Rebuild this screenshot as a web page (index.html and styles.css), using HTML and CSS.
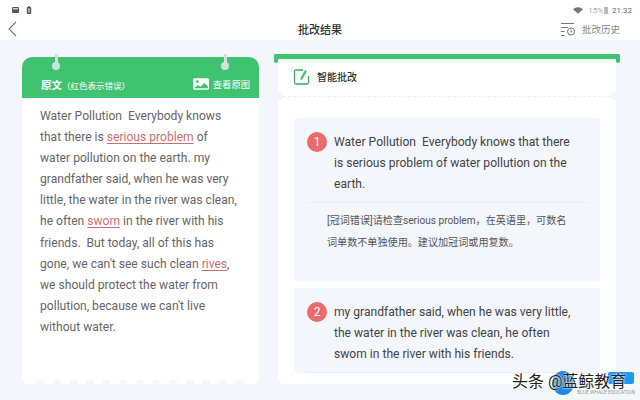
FILE: index.html
```html
<!DOCTYPE html>
<html lang="zh-CN">
<head>
    <meta charset="UTF-8">
    <meta name="viewport" content="width=device-width, initial-scale=1.0">
    <title>批改结果</title>
    <link rel="stylesheet" href="styles.css">
</head>
<body>
    <div class="status-bar">
        <div class="status-left">
            <svg width="7" height="6" viewBox="0 0 7 6"><rect width="7" height="6" rx="1" fill="#555"/><rect x="1" y="1" width="5" height="1.500" fill="#ccc"/></svg>
            <svg width="6" height="8" viewBox="0 0 6 9"><rect x="0.500" y="1" width="5" height="8" rx="1" fill="#555"/><rect x="2" y="0" width="2" height="1" fill="#555"/><rect x="2" y="2.500" width="2" height="5" fill="#bbb"/></svg>
        </div>
        <div class="status-right">
            <svg width="10" height="7" viewBox="0 0 12 8"><path d="M0 2.500C3.500-.8 8.500-.8 12 2.500L6 8Z" fill="#777"/></svg>
            <span class="battery-pct">15%</span>
            <span class="battery"></span>
            <span class="clock">21:32</span>
        </div>
    </div>
    <header class="top-bar">
        <svg class="back" width="9" height="16" viewBox="0 0 9 16"><path d="M8 1L1 8l7 7" fill="none" stroke="#777" stroke-width="1.100"/></svg>
        <h1>批改结果</h1>
        <div class="history">
            <svg width="15" height="13" viewBox="0 0 15 13" fill="none" stroke="#777" stroke-width="1"><path d="M1 .5h13M1 4.500h7M1 8.500h3.500M1 12.500h3.500"/><circle cx="11" cy="8.500" r="3.500"/><path d="M11 6.800v1.900h1.500"/></svg>
            <span>批改历史</span>
        </div>
    </header>
    <main class="content">
        <section class="origin">
            <div class="origin-head">
                <span class="hole hole-left"></span>
                <span class="hole hole-right"></span>
                <div class="origin-title"><b>原文</b><small>（红色表示错误）</small></div>
                <div class="origin-link">
                    <svg width="16" height="12" viewBox="0 0 15 11"><rect width="15" height="11" rx="1.500" fill="#fff"/><circle cx="4" cy="3.200" r="1.300" fill="#3fc371"/><path d="M1 9.500l3.500-3 2.500 1.500 3.500-3.500 3.500 3v2z" fill="#3fc371"/></svg>
                    <span>查看原图</span>
                </div>
            </div>
            <p class="origin-text">Water Pollution&nbsp; Everybody knows that there is <u>serious problem</u> of water pollution on the earth. my grandfather said, when he was very little, the water in the river was clean, he often <u>swom</u> in the river with his friends.&nbsp; But today, all of this has gone, we can't see such clean <u>rives</u>, we should protect the water from pollution, because we can't live without water.</p>
            <div class="scallops"></div>
        </section>
        <section class="review">
            <div class="review-bar"></div>
            <div class="review-card">
                <div class="review-head">
                    <svg width="19" height="18" viewBox="0 0 19 18" fill="none"><path d="M10 2H3a1.500 1.500 0 0 0-1.500 1.500v11A1.500 1.500 0 0 0 3 16h11a1.500 1.500 0 0 0 1.500-1.500V8" stroke="#3fa868" stroke-width="1.300"/><path d="M8 11.500L13 2.500" stroke="#3fc371" stroke-width="2.200"/></svg>
                    <span>智能批改</span>
                </div>
                <div class="review-list">
                    <article class="item">
                        <div class="sentence">
                            <span class="num">1</span>
                            <p>Water Pollution&nbsp; Everybody knows that there is serious problem of water pollution on the earth.</p>
                        </div>
                        <div class="note">[冠词错误]请检查serious problem，在英语里，可数名词单数不单独使用。建议加冠词或用复数。</div>
                    </article>
                    <article class="item item-cut">
                        <div class="sentence">
                            <span class="num">2</span>
                            <p>my grandfather said, when he was very little, the water in the river was clean, he often swom in the river with his friends.</p>
                        </div>
                    </article>
                </div>
            </div>
        </section>
    </main>
    <div class="watermark">
        <span class="wm-blob"></span>
        <span class="wm-tag"></span>
        <span class="wm-sub">BLUE WHALE EDUCATION</span>
        <span class="wm-text">头条 @蓝鲸教育</span>
    </div>
</body>
</html>
```

FILE: styles.css
```css
* {
    margin: 0;
    padding: 0;
    box-sizing: border-box;
}
html, body {
    height: 400px;
    overflow: hidden;
}
body {
    font-family: Roboto, "Noto Sans CJK SC", sans-serif;
    background-color: #f3f6fa;
    color: #555;
}

.status-bar {
    height: 18px;
    padding: 2px 8px 0 12px;
    display: flex;
    justify-content: space-between;
    align-items: center;
    background-color: #fff;
}
.status-left {
    display: flex;
    align-items: center;
    gap: 7px;
}
.status-right {
    display: flex;
    align-items: center;
    font-size: 8px;
    color: #aaa;
}
.battery-pct {
    margin-left: 5px;
}
.battery {
    width: 4px;
    height: 7px;
    margin-left: 1px;
    background-color: #c9b5a8;
}
.clock {
    margin-left: 4px;
    color: #666;
}

.top-bar {
    height: 22px;
    padding: 0 20px 0 8px;
    display: flex;
    align-items: center;
    justify-content: space-between;
    background-color: #fff;
    position: relative;
}
.top-bar h1 {
    font-size: 11px;
    font-weight: 500;
    color: #333;
    position: absolute;
    left: 0;
    right: 0;
    text-align: center;
}
.history {
    display: flex;
    align-items: center;
    gap: 7px;
    font-size: 9.500px;
    color: #888;
}

.content {
    padding: 14px 20px 0 22px;
    display: flex;
    gap: 19px;
}

.origin {
    width: 237px;
    height: 327px;
    margin-top: 3px;
    display: flex;
    flex-direction: column;
    border-radius: 10px 10px 6px 6px;
    background-color: #fff;
}
.origin-head {
    height: 41px;
    padding: 12px 9px 0 19px;
    display: flex;
    justify-content: space-between;
    align-items: center;
    background-color: #3fc371;
    border-radius: 10px 10px 0 0;
    position: relative;
    color: #fff;
}
.hole {
    position: absolute;
    top: 5px;
    width: 8px;
    height: 8px;
    border-radius: 50%;
    background-color: #cfe3d8;
}
.hole::before {
    content: "";
    position: absolute;
    left: 2.500px;
    top: -8px;
    width: 3px;
    height: 10px;
    background-color: #e3d8dc;
}
.hole-left {
    left: 30px;
}
.hole-right {
    left: 199px;
}
.origin-title b {
    font-size: 10.500px;
    font-weight: 700;
}
.origin-title small {
    font-size: 8.500px;
}
.origin-link {
    display: flex;
    align-items: center;
    gap: 4px;
    font-size: 9.300px;
}
.origin-text {
    flex: 1;
    padding: 8px 20px 0 18px;
    font-size: 12.100px;
    line-height: 21.100px;
    color: #666;
}
.origin-text u {
    color: #c9706f;
    text-underline-offset: 2px;
}
.scallops {
    height: 5px;
    margin: 0 10px;
    background: radial-gradient(circle at 50% 100%, #f3f6fa 4px, transparent 4.500px) 0 0 / 16.600px 5px repeat-x;
}

.review {
    width: 346px;
    margin-left: -4px;
}
.review-bar {
    height: 5px;
    background-color: #3fc371;
    border-radius: 3px;
    position: relative;
}
.review-bar::before,
.review-bar::after {
    content: "";
    position: absolute;
    top: 0;
    width: 4px;
    height: 9px;
    border-radius: 2px;
    background-color: #3fc371;
}
.review-bar::before {
    left: 0;
}
.review-bar::after {
    right: 0;
}
.review-card {
    width: 338px;
    height: 325px;
    margin-left: 4px;
    background: linear-gradient(#e6f5ea, #fff 5px) #fff;
    border-radius: 0 0 6px 6px;
    overflow: hidden;
}
.review-head {
    height: 38px;
    padding: 0 0 2px 15px;
    display: flex;
    align-items: center;
    gap: 5px;
    font-size: 10px;
    font-weight: 500;
    color: #333;
    border-bottom: 1px dashed #eee;
    position: relative;
}
.review-head::before,
.review-head::after {
    content: "";
    position: absolute;
    bottom: -5px;
    width: 10px;
    height: 10px;
    border-radius: 50%;
    background-color: #f3f6fa;
}
.review-head::before {
    left: -5px;
}
.review-head::after {
    right: -5px;
}
.review-list {
    padding: 21px 16px 0;
}
.item {
    background-color: #f3f6fa;
    border-radius: 3px;
    margin-bottom: 7px;
    padding: 14px 12px 0 13px;
    height: 163px;
}
.item-cut {
    height: 85px;
    border-radius: 3px 3px 0 0;
}
.sentence {
    display: flex;
    gap: 7px;
    padding-bottom: 7px;
    border-bottom: 1px solid #ecedf0;
}
.sentence p {
    flex: 1;
    padding-right: 14px;
    font-size: 12.100px;
    line-height: 21.100px;
    color: #444;
}
.num {
    width: 20px;
    height: 20px;
    flex: none;
    border-radius: 50%;
    background-color: #e96b6b;
    color: #fff;
    font-size: 12px;
    line-height: 20px;
    text-align: center;
}
.note {
    padding: 7px 15px 0 20px;
    font-size: 10.100px;
    line-height: 21.500px;
    color: #555;
}

.watermark {
    position: absolute;
    left: 511px;
    top: 368px;
    width: 129px;
    height: 30px;
}
.wm-text {
    position: absolute;
    left: 1px;
    top: 0;
    font-size: 16px;
    color: #222;
    white-space: nowrap;
    text-shadow: 0 0 2px #fff, 0 0 2px #fff;
}
.wm-blob {
    position: absolute;
    left: 41px;
    top: 3px;
    width: 22px;
    height: 24px;
    border-radius: 50%;
    background-color: #1e88e5;
}
.wm-tag {
    position: absolute;
    left: 97px;
    top: 4px;
    width: 26px;
    height: 12px;
    border-radius: 2px;
    background-color: #2196f3;
}
.wm-sub {
    position: absolute;
    left: 66px;
    top: 21px;
    font-size: 5px;
    color: #999;
    white-space: nowrap;
}
```
